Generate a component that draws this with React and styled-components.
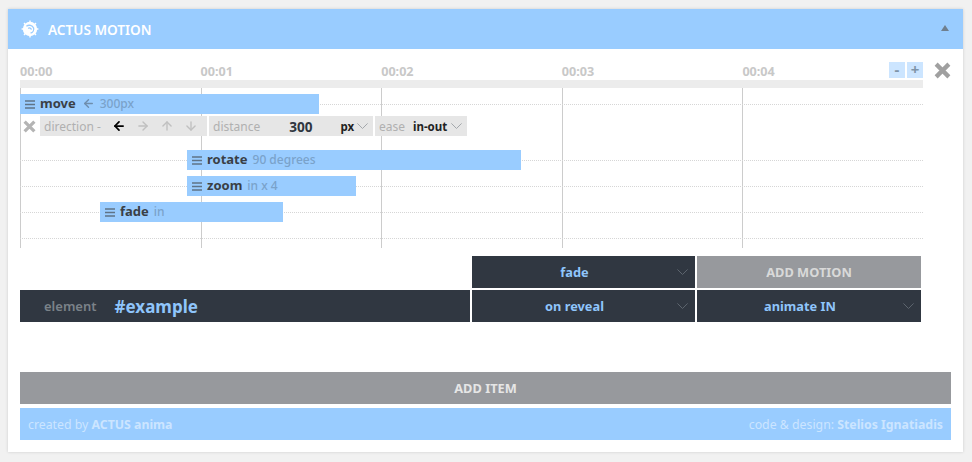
import React from "react";
import styled, { createGlobalStyle } from "styled-components";
import { ArrowDown, ArrowLeft, ArrowRight, ArrowUp } from "lucide-react";

const GlobalStyle = createGlobalStyle`
  html, body {
    margin: 0;
    padding: 0;
    height: 100%;
    overflow: hidden;
    background: #f1f1f1;
    font-family: "Noto Sans", "Open Sans", "Liberation Sans", sans-serif;
  }
`;

const tracks = [
  { name: "rotate", note: "90 degrees", start: 167, width: 334 },
  { name: "zoom", note: "in x 4", start: 167, width: 169 },
  { name: "fade", note: "in", start: 80, width: 183 },
];

const Lines = () => (
  <HandleIcon viewBox="0 0 10 9">
    <path d="M0 1h10M0 4.5h10M0 8h10" stroke="currentColor" strokeWidth="1.6" />
  </HandleIcon>
);

const Chevron = () => (
  <ChevronIcon viewBox="0 0 11 6">
    <path d="M.4.4l5.1 5.1L10.6.4" fill="none" stroke="currentColor" strokeWidth="1" />
  </ChevronIcon>
);

const Cross = ({ size }) => (
  <CrossIcon $size={size} viewBox="0 0 16 16">
    <path d="M2 2l12 12M14 2L2 14" stroke="currentColor" strokeWidth="4" />
  </CrossIcon>
);

const Logo = () => (
  <svg width="18" height="18" viewBox="0 0 18 18">
    <circle cx="9" cy="9" r="7.2" fill="#fff" />
    <path
      d="M9 .6v2M15 3l-1.4 1.4M17.4 9h-2M15 15l-1.4-1.4M9 17.4v-2M3 15l1.4-1.4M.6 9h2M3 3l1.4 1.4"
      stroke="#fff"
      strokeWidth="1.4"
    />
    <path
      d="M5.4 6.2a4.8 4.8 0 0 1 7.2 1.8a4.2 4.2 0 0 1-3 5M7.2 8.4a2 2 0 0 1 3.2 1.2"
      fill="none"
      stroke="#99ccff"
      strokeWidth="1.3"
    />
  </svg>
);

function App() {
  return (
    <>
      <GlobalStyle />
      <Card>
        <Header>
          <Logo />
          <HeaderTitle>ACTUS MOTION</HeaderTitle>
          <Collapse />
        </Header>
        <Body>
          <TimelineRow>
            <Timeline>
              <Ruler>
                {["00:00", "00:01", "00:02", "00:03", "00:04"].map((time) => (
                  <Time key={time}>{time}</Time>
                ))}
                <ZoomButtons>
                  <ZoomButton>-</ZoomButton>
                  <ZoomButton>+</ZoomButton>
                </ZoomButtons>
              </Ruler>
              <Scrollbar />
              <Tracks>
                <Track>
                  <Bar $start={0} $width={299}>
                    <Lines />
                    <BarName>move</BarName>
                    <BarArrow>
                      <ArrowLeft size={13} strokeWidth={2.6} />
                    </BarArrow>
                    <BarNote>300px</BarNote>
                  </Bar>
                </Track>
                <Editor>
                  <EditorClose>
                    <Cross size={13} />
                  </EditorClose>
                  <Field $width={167}>
                    <FieldLabel>direction -</FieldLabel>
                    <Arrows>
                      <ArrowLeft size={14} strokeWidth={3} color="#000" />
                      <ArrowRight size={14} strokeWidth={2.4} />
                      <ArrowUp size={14} strokeWidth={2.4} />
                      <ArrowDown size={14} strokeWidth={2.4} />
                    </Arrows>
                  </Field>
                  <Field $width={164}>
                    <FieldLabel>distance</FieldLabel>
                    <Distance>300</Distance>
                    <Unit>px</Unit>
                    <Chevron />
                  </Field>
                  <Field $width={92}>
                    <FieldLabel>ease</FieldLabel>
                    <EaseValue>in-out</EaseValue>
                    <Chevron />
                  </Field>
                </Editor>
                <Spacer />
                {tracks.map((track) => (
                  <Track key={track.name}>
                    <Bar $start={track.start} $width={track.width}>
                      <Lines />
                      <BarName>{track.name}</BarName>
                      <BarNote>{track.note}</BarNote>
                    </Bar>
                  </Track>
                ))}
                <Track />
              </Tracks>
            </Timeline>
            <CloseTimeline>
              <Cross size={17} />
            </CloseTimeline>
          </TimelineRow>

          <Controls>
            <ControlsBlank />
            <Select>
              <SelectText>fade</SelectText>
              <Chevron />
            </Select>
            <AddMotion>ADD MOTION</AddMotion>
            <ElementBox>
              <ElementLabel>element</ElementLabel>
              <ElementName>#example</ElementName>
            </ElementBox>
            <Select>
              <SelectText>on reveal</SelectText>
              <Chevron />
            </Select>
            <Select>
              <SelectText>animate IN</SelectText>
              <Chevron />
            </Select>
          </Controls>

          <AddItem>ADD ITEM</AddItem>
          <Footer>
            <span>
              created by <b>ACTUS anima</b>
            </span>
            <span>
              code &amp; design: <b>Stelios Ignatiadis</b>
            </span>
          </Footer>
        </Body>
      </Card>
    </>
  );
}

const Card = styled.div`
  width: 955px;
  height: 443px;
  margin: 9px 0 0 8px;
  background: #fff;
  box-shadow: 0 0 3px rgba(0, 0, 0, 0.15);
`;

const Header = styled.div`
  display: flex;
  align-items: center;
  height: 40px;
  padding: 0 14px 0 13px;
  background: #99ccff;
`;

const HeaderTitle = styled.div`
  margin-left: 9px;
  color: #fff;
  font-size: 13.6px;
  font-weight: 600;
`;

const Collapse = styled.div`
  margin-left: auto;
  margin-top: -3px;
  width: 0;
  height: 0;
  border-left: 4px solid transparent;
  border-right: 4px solid transparent;
  border-bottom: 6px solid #6f7f8f;
`;

const Body = styled.div`
  padding: 13px 12px 0;
`;

const TimelineRow = styled.div`
  display: flex;
`;

const Timeline = styled.div`
  width: 903px;
`;

const Ruler = styled.div`
  display: flex;
  height: 18px;
  position: relative;
`;

const Time = styled.div`
  width: 180.6px;
  padding-top: 2px;
  color: #c8c8c8;
  font-size: 12.6px;
  font-weight: 700;
  line-height: 16px;
`;

const ZoomButtons = styled.div`
  position: absolute;
  top: 0;
  right: 0;
  display: flex;
  gap: 2px;
`;

const ZoomButton = styled.div`
  width: 16px;
  height: 16px;
  background: #cce5ff;
  color: #7f94a8;
  font-size: 15px;
  font-weight: 700;
  line-height: 15px;
  text-align: center;
`;

const Scrollbar = styled.div`
  height: 8px;
  background: #ececec;
`;

const Tracks = styled.div`
  height: 160px;
  background-image: repeating-linear-gradient(
    90deg,
    #cccccc 0,
    #cccccc 1px,
    transparent 1px,
    transparent 180.6px
  );
`;

const Track = styled.div`
  position: relative;
  height: 26px;
  padding-top: 6px;
  box-sizing: border-box;

  &::before {
    content: "";
    position: absolute;
    left: 0;
    right: 0;
    top: 16px;
    border-top: 1px dotted #d6d6d6;
  }
`;

const Bar = styled.div`
  position: relative;
  display: flex;
  align-items: center;
  box-sizing: border-box;
  height: 20px;
  width: ${(p) => p.$width}px;
  margin-left: ${(p) => p.$start}px;
  padding: 0 0 2px 5px;
  background: #99ccff;
  color: #3a3f46;
  font-size: 13px;
`;

const HandleIcon = styled.svg`
  width: 10px;
  height: 9px;
  margin: 2px 5px 0 0;
  color: #5f7387;
`;

const BarName = styled.span`
  font-weight: 700;
`;

const BarArrow = styled.span`
  display: flex;
  margin-left: 6px;
  color: #6f8eae;
`;

const BarNote = styled.span`
  margin-left: 5px;
  color: #7aa2ca;
  font-size: 12px;
  font-weight: 500;
`;

const Editor = styled.div`
  display: flex;
  gap: 2px;
  height: 20px;
  margin-top: 2px;
`;

const EditorClose = styled.div`
  display: flex;
  align-items: center;
  justify-content: center;
  width: 18px;
  color: #b4b4b4;
`;

const CrossIcon = styled.svg`
  display: block;
  width: ${(p) => p.$size}px;
  height: ${(p) => p.$size}px;
`;

const Field = styled.div`
  display: flex;
  align-items: center;
  box-sizing: border-box;
  width: ${(p) => p.$width}px;
  padding: 0 5px 0 4px;
  background: #e6e6e6;
  color: #b0b0b0;
`;

const FieldLabel = styled.span`
  font-size: 12px;
`;

const Arrows = styled.div`
  display: flex;
  gap: 10px;
  margin-left: 11px;
  color: #c0c0c0;
`;

const Distance = styled.span`
  margin-left: 29px;
  color: #2f3640;
  font-size: 13.6px;
  font-weight: 700;
`;

const Unit = styled.span`
  margin-left: 28px;
  color: #222;
  font-size: 11.5px;
  font-weight: 700;
`;

const EaseValue = styled.span`
  margin-left: 8px;
  color: #222;
  font-size: 11.5px;
  font-weight: 700;
`;

const ChevronIcon = styled.svg`
  flex: none;
  width: 11px;
  height: 6px;
  margin-left: auto;
  color: #a4a8ac;
`;

const Spacer = styled.div`
  height: 8px;
`;

const CloseTimeline = styled.div`
  margin-left: 11px;
  color: #a0a0a0;
`;

const Controls = styled.div`
  display: grid;
  grid-template-columns: 450px 223px 224px;
  grid-auto-rows: 32px;
  gap: 2px;
  margin-top: 8px;
`;

const ControlsBlank = styled.div``;

const Select = styled.div`
  display: flex;
  align-items: center;
  padding: 0 7px 0 0;
  background: #303741;
  color: #8fc5fb;
  font-size: 12.8px;
  font-weight: 700;

  ${ChevronIcon} {
    color: #5d656e;
  }
`;

const SelectText = styled.span`
  flex: 1;
  text-align: center;
`;

const AddMotion = styled.div`
  display: flex;
  align-items: center;
  justify-content: center;
  background: #97999d;
  color: #d9d9d9;
  font-size: 12.8px;
  font-weight: 700;
`;

const ElementBox = styled.div`
  display: flex;
  align-items: center;
  padding-left: 24px;
  background: #303741;
`;

const ElementLabel = styled.span`
  color: #7b8289;
  font-size: 13px;
  font-weight: 600;
`;

const ElementName = styled.span`
  margin-left: 18px;
  color: #8fc5fb;
  font-size: 17px;
  font-weight: 700;
`;

const AddItem = styled.div`
  display: flex;
  align-items: center;
  justify-content: center;
  height: 32px;
  margin-top: 50px;
  background: #97999d;
  color: #e6e6e6;
  font-size: 12.8px;
  font-weight: 700;
`;

const Footer = styled.div`
  display: flex;
  align-items: center;
  justify-content: space-between;
  height: 32px;
  margin-top: 4px;
  padding: 0 8px;
  background: #99ccff;
  color: #cce5ff;
  font-size: 12.3px;
`;

export default App;
